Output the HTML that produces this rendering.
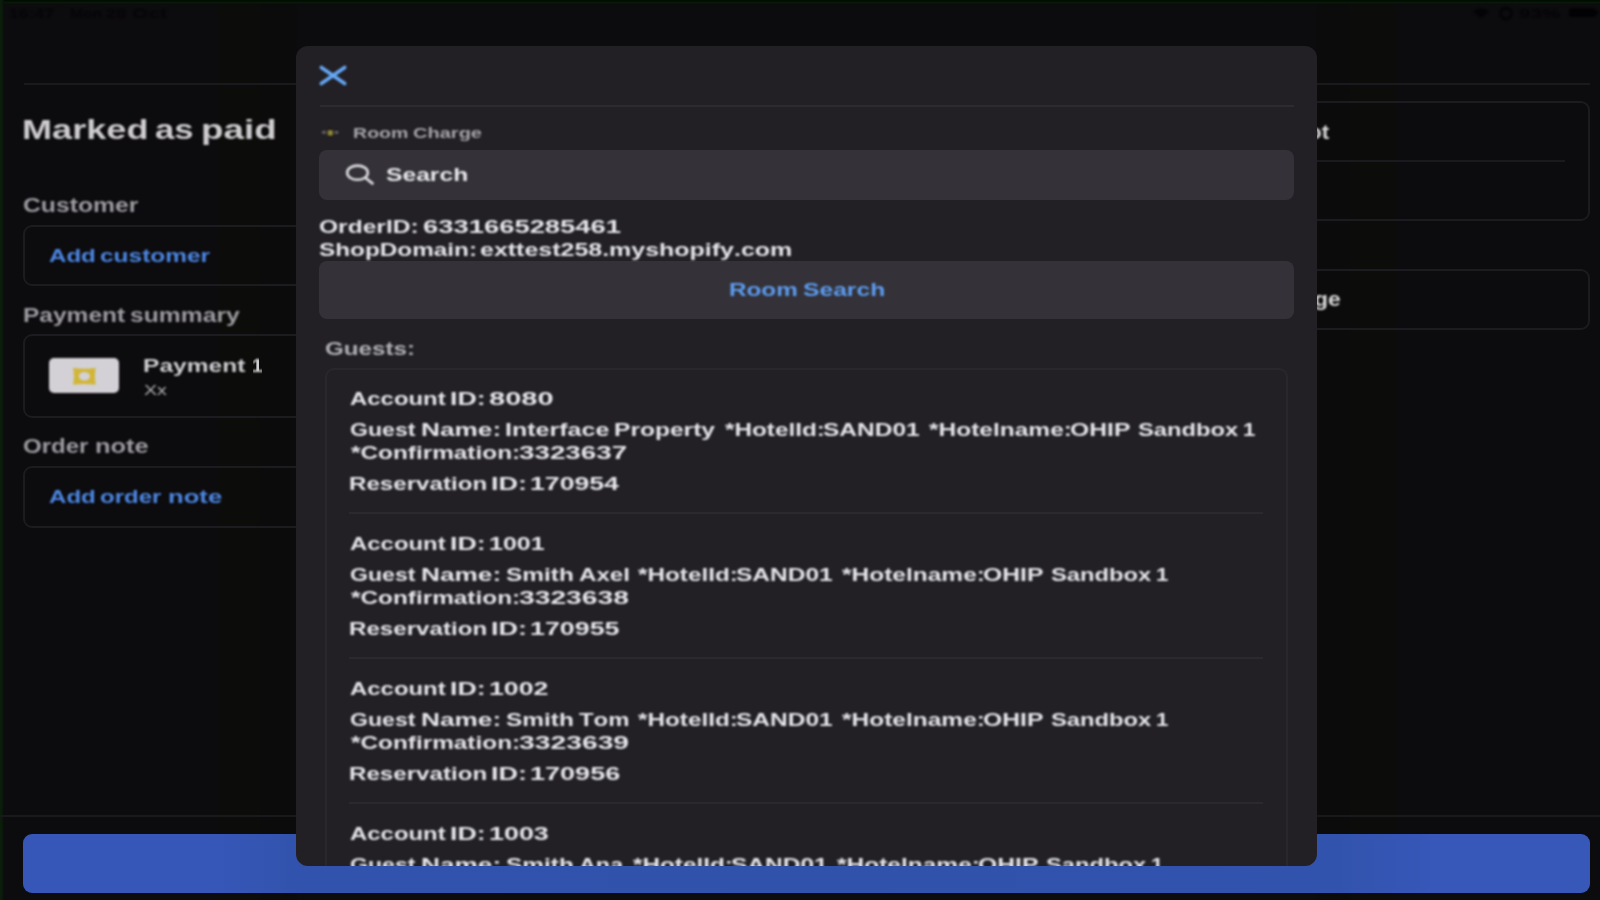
<!DOCTYPE html>
<html lang="en"><head><meta charset="utf-8"><title>Room Charge</title>
<style>
html,body{margin:0;padding:0;background:#0c0b0e;}
body{width:1600px;height:900px;overflow:hidden;font-family:"Liberation Sans",sans-serif;}
#app{position:relative;width:1600px;height:900px;overflow:hidden;background:#0c0b0e;}
#app div,#app span,#app svg{position:absolute;box-sizing:border-box;}
.t{white-space:nowrap;font-kerning:none;line-height:1;transform-origin:0 0;display:block;filter:blur(0.8px);}
.edge-top{left:0;top:0;width:1600px;height:4px;background:linear-gradient(#010a01 0,#021202 45%,#0a1a0a 65%,#0c0b0e 100%);}
.edge-left{left:0;top:0;width:4px;height:900px;background:linear-gradient(90deg,#0a210a,#0b180b 55%,#0c0b0e);}
.hline{height:2px;background:#1a191d;}
.card{border:2px solid #1c1b20;border-radius:9px;}
.chip{left:49.3px;top:358.4px;width:70px;height:34.2px;background:#d3d1d6;border-radius:5px;filter:blur(0.8px);}
.paybtn{left:23px;top:833.800px;width:1566.500px;height:59.200px;background:linear-gradient(90deg,#3657b8 0,#3657b8 12%,#3253ad 17%,#3152ab 50%,#3253ad 84%,#3757b9 90%,#3757b9 100%);border-radius:9px;}
#modal{left:296px;top:46px;width:1020.5px;height:820.3px;background:#222025;border-radius:12px;overflow:hidden;}
#mi{left:-296px;top:-46px;width:1600px;height:900px;}
.msep{left:320px;top:104.5px;width:974px;height:2px;background:#2c2b30;}
.field{left:319px;width:975px;background:#343238;border-radius:8px;}
.list{left:325px;top:368px;width:963px;height:560px;border:2px solid #29272d;border-radius:9px;}
.lsep{left:349px;width:914px;height:2px;background:#2a292e;}
.soft{filter:blur(0.8px);}
.band{top:0;height:900px;}

</style></head>
<body>
<div id="app">
<div class="band" style="left:218px;width:42px;background:#0c0d0a"></div>
<div class="band" style="left:260px;width:37px;background:#0c0b0b"></div>
<div class="band" style="left:1316px;width:34px;background:#0c0b0b"></div>
<div class="band" style="left:1350px;width:46px;background:#0c0d0a"></div>
<div class="edge-top"></div>
<div class="edge-left"></div>
<div class="hline" style="left:24px;top:83px;width:1566px"></div>
<svg class="soft" style="left:1468px;top:4px" width="132" height="18" viewBox="0 0 132 18">
<path d="M5 7.500 Q13 1.500 21 7.500 L13 14 Z" fill="#040306"/>
<circle cx="38" cy="9.500" r="5.500" fill="none" stroke="#040306" stroke-width="2.400"/>
<rect x="101" y="4.500" width="27" height="8.500" rx="2.800" fill="#020103"/>
<rect x="128.300" y="7" width="1.800" height="3.600" rx="0.800" fill="#020103"/>
</svg>
<div class="card" style="left:23px;top:224.5px;width:400px;height:61.5px"></div>
<div class="card" style="left:23px;top:334.4px;width:400px;height:83.200px"></div>
<div class="chip"></div>
<svg class="soft" style="left:72px;top:366.5px" width="25" height="19" viewBox="0 0 25 19">
<path d="M1.200 0.800 Q12.400 2.600 23.600 0.800 Q22 9.300 23.600 17.800 Q12.400 16 1.200 17.800 Q2.800 9.300 1.200 0.800 Z M12.400 5.100 A5.600 4.200 0 1 0 12.400 13.500 A5.600 4.200 0 1 0 12.400 5.100 Z" fill="#d1b538" fill-rule="evenodd"/>
</svg>
<div class="card" style="left:23px;top:465.8px;width:400px;height:61.800px"></div>
<div class="card" style="left:1200px;top:101px;width:389.500px;height:120.400px"></div>
<div class="hline" style="left:1300px;top:160px;width:265px"></div>
<div class="card" style="left:1200px;top:269.200px;width:389.500px;height:61.200px"></div>
<div class="hline" style="left:0;top:815px;width:1600px;background:#19181b"></div>
<div class="paybtn"></div>

<span class="t" style="left:9.49px;top:6.57px;font-size:13.5px;font-weight:700;color:#060508;transform:scaleX(1.3042)">16:47</span>
<span class="t" style="left:69.96px;top:6.57px;font-size:13.5px;font-weight:700;color:#060508;transform:scaleX(1.1539)">Mon</span>
<span class="t" style="left:106.37px;top:6.57px;font-size:13.5px;font-weight:700;color:#060508;transform:scaleX(1.3444)">28</span>
<span class="t" style="left:132.14px;top:6.57px;font-size:13.5px;font-weight:700;color:#060508;transform:scaleX(1.5606)">Oct</span>
<span class="t" style="left:1519.29px;top:6.57px;font-size:13.5px;font-weight:700;color:#050407;transform:scaleX(1.5270)">93%</span>
<span class="t" style="left:22.18px;top:116.74px;font-size:27px;font-weight:700;color:#cecccf;transform:scaleX(1.3375)">Marked</span>
<span class="t" style="left:155.23px;top:116.74px;font-size:27px;font-weight:700;color:#cecccf;transform:scaleX(1.2885)">as</span>
<span class="t" style="left:200.58px;top:116.74px;font-size:27px;font-weight:700;color:#cecccf;transform:scaleX(1.3621)">paid</span>
<span class="t" style="left:22.99px;top:195.37px;font-size:20px;font-weight:700;color:#9e9ca1;transform:scaleX(1.2361)">Customer</span>
<span class="t" style="left:48.50px;top:245.72px;font-size:19px;font-weight:700;color:#4d88e4;transform:scaleX(1.2682)">Add</span>
<span class="t" style="left:100.29px;top:245.72px;font-size:19px;font-weight:700;color:#4d88e4;transform:scaleX(1.2870)">customer</span>
<span class="t" style="left:22.86px;top:305.27px;font-size:20px;font-weight:700;color:#9e9ca1;transform:scaleX(1.2251)">Payment</span>
<span class="t" style="left:130.38px;top:305.27px;font-size:20px;font-weight:700;color:#9e9ca1;transform:scaleX(1.2340)">summary</span>
<span class="t" style="left:143.36px;top:355.52px;font-size:19px;font-weight:700;color:#cfcfd2;transform:scaleX(1.2922)">Payment</span>
<span class="t" style="left:251.61px;top:355.52px;font-size:19px;font-weight:700;color:#cfcfd2;transform:scaleX(0.9953)">1</span>
<span class="t" style="left:144.26px;top:382.38px;font-size:15.5px;font-weight:400;color:#b0b0b3;transform:scaleX(1.2689)">Xx</span>
<span class="t" style="left:23.01px;top:436.07px;font-size:20px;font-weight:700;color:#9e9ca1;transform:scaleX(1.2017)">Order</span>
<span class="t" style="left:94.92px;top:436.07px;font-size:20px;font-weight:700;color:#9e9ca1;transform:scaleX(1.2719)">note</span>
<span class="t" style="left:48.50px;top:487.12px;font-size:19px;font-weight:700;color:#4d88e4;transform:scaleX(1.2682)">Add</span>
<span class="t" style="left:100.31px;top:487.12px;font-size:19px;font-weight:700;color:#4d88e4;transform:scaleX(1.2622)">order</span>
<span class="t" style="left:167.61px;top:487.12px;font-size:19px;font-weight:700;color:#4d88e4;transform:scaleX(1.3506)">note</span>
<span class="t" style="left:1308.12px;top:121.87px;font-size:20px;font-weight:700;color:#d8d8da;transform:scaleX(1.1204)">ot</span>
<span class="t" style="left:1314.06px;top:289.07px;font-size:20px;font-weight:700;color:#d8d8da;transform:scaleX(1.1449)">ge</span>
<div id="modal"><div id="mi">
<svg class="soft" style="left:317px;top:63px" width="32" height="25" viewBox="0 0 32 25">
<path d="M4.300 4.500 L27.700 20.600 M27.700 4.500 L4.300 20.600" stroke="#66a8f8" stroke-width="3.600" stroke-linecap="round" fill="none"/>
</svg>
<div class="msep"></div>
<svg class="soft" style="left:318px;top:124px" width="26" height="18" viewBox="0 0 26 18">
<rect x="9.700" y="4.700" width="5.200" height="8.400" rx="1.600" fill="#141203"/>
<rect x="9.700" y="6" width="5.200" height="5.800" rx="1.300" fill="#8c853a"/>
<ellipse cx="6" cy="8.200" rx="2.200" ry="1.700" fill="#636065"/>
<ellipse cx="18.400" cy="8.300" rx="2.100" ry="1.600" fill="#656266"/>
</svg>
<div class="field" style="top:150px;height:50px"></div>
<svg class="soft" style="left:344px;top:162px" width="32" height="25" viewBox="0 0 32 25">
<ellipse cx="13.500" cy="10.700" rx="10.300" ry="7.100" stroke="#dcdce0" stroke-width="2.600" fill="none"/>
<path d="M21.600 16 L28.400 21.400" stroke="#dcdce0" stroke-width="2.800" stroke-linecap="round"/>
</svg>
<div class="field" style="top:261px;height:58.3px"></div>
<div class="list"></div>
<div class="lsep" style="top:511.5px"></div>
<div class="lsep" style="top:656.5px"></div>
<div class="lsep" style="top:801.5px"></div>

<span class="t" style="left:353.09px;top:124.88px;font-size:15.5px;font-weight:700;color:#a6a5aa;transform:scaleX(1.2621)">Room</span>
<span class="t" style="left:412.68px;top:124.88px;font-size:15.5px;font-weight:700;color:#a6a5aa;transform:scaleX(1.2922)">Charge</span>
<span class="t" style="left:386.29px;top:165.22px;font-size:19px;font-weight:700;color:#e8e8ec;transform:scaleX(1.2977)">Search</span>
<span class="t" style="left:318.99px;top:217.22px;font-size:19px;font-weight:700;color:#e6e6ea;transform:scaleX(1.2926)">OrderID:</span>
<span class="t" style="left:422.75px;top:217.22px;font-size:19px;font-weight:700;color:#e6e6ea;transform:scaleX(1.4415)">6331665285461</span>
<span class="t" style="left:319.30px;top:239.92px;font-size:19px;font-weight:700;color:#e6e6ea;transform:scaleX(1.2798)">ShopDomain:</span>
<span class="t" style="left:480.27px;top:239.92px;font-size:19px;font-weight:700;color:#e6e6ea;transform:scaleX(1.3143)">exttest258.myshopify.com</span>
<span class="t" style="left:728.63px;top:280.22px;font-size:19px;font-weight:700;color:#5d9cf0;transform:scaleX(1.2778)">Room</span>
<span class="t" style="left:802.69px;top:280.22px;font-size:19px;font-weight:700;color:#5d9cf0;transform:scaleX(1.2977)">Search</span>
<span class="t" style="left:325.26px;top:338.92px;font-size:19px;font-weight:700;color:#b2b2b6;transform:scaleX(1.2732)">Guests:</span>
<span class="t" style="left:350.40px;top:388.92px;font-size:19px;font-weight:700;color:#e6e6ea;transform:scaleX(1.2590)">Account</span>
<span class="t" style="left:449.81px;top:388.92px;font-size:19px;font-weight:700;color:#e6e6ea;transform:scaleX(1.4081)">ID:</span>
<span class="t" style="left:489.48px;top:388.92px;font-size:19px;font-weight:700;color:#e6e6ea;transform:scaleX(1.5262)">8080</span>
<span class="t" style="left:350.05px;top:420.42px;font-size:19px;font-weight:700;color:#e6e6ea;transform:scaleX(1.2170)">Guest</span>
<span class="t" style="left:421.05px;top:420.42px;font-size:19px;font-weight:700;color:#e6e6ea;transform:scaleX(1.3806)">Name:</span>
<span class="t" style="left:504.53px;top:420.42px;font-size:19px;font-weight:700;color:#e6e6ea;transform:scaleX(1.3173)">Interface</span>
<span class="t" style="left:613.76px;top:420.42px;font-size:19px;font-weight:700;color:#e6e6ea;transform:scaleX(1.2923)">Property</span>
<span class="t" style="left:725.23px;top:420.42px;font-size:19px;font-weight:700;color:#e6e6ea;transform:scaleX(1.2791)">*HotelId:</span>
<span class="t" style="left:823.39px;top:420.42px;font-size:19px;font-weight:700;color:#e6e6ea;transform:scaleX(1.2897)">SAND01</span>
<span class="t" style="left:929.03px;top:420.42px;font-size:19px;font-weight:700;color:#e6e6ea;transform:scaleX(1.2893)">*Hotelname:</span>
<span class="t" style="left:1070.49px;top:420.42px;font-size:19px;font-weight:700;color:#e6e6ea;transform:scaleX(1.2993)">OHIP</span>
<span class="t" style="left:1137.72px;top:420.42px;font-size:19px;font-weight:700;color:#e6e6ea;transform:scaleX(1.2496)">Sandbox</span>
<span class="t" style="left:1243.01px;top:420.42px;font-size:19px;font-weight:700;color:#e6e6ea;transform:scaleX(1.1650)">1</span>
<span class="t" style="left:350.93px;top:443.42px;font-size:19px;font-weight:700;color:#e6e6ea;transform:scaleX(1.2818)">*Confirmation:</span>
<span class="t" style="left:519.06px;top:443.42px;font-size:19px;font-weight:700;color:#e6e6ea;transform:scaleX(1.4622)">3323637</span>
<span class="t" style="left:349.39px;top:474.42px;font-size:19px;font-weight:700;color:#e6e6ea;transform:scaleX(1.2698)">Reservation</span>
<span class="t" style="left:490.59px;top:474.42px;font-size:19px;font-weight:700;color:#e6e6ea;transform:scaleX(1.4216)">ID:</span>
<span class="t" style="left:529.52px;top:474.42px;font-size:19px;font-weight:700;color:#e6e6ea;transform:scaleX(1.4025)">170954</span>
<span class="t" style="left:350.40px;top:533.92px;font-size:19px;font-weight:700;color:#e6e6ea;transform:scaleX(1.2590)">Account</span>
<span class="t" style="left:449.81px;top:533.92px;font-size:19px;font-weight:700;color:#e6e6ea;transform:scaleX(1.4081)">ID:</span>
<span class="t" style="left:488.83px;top:533.92px;font-size:19px;font-weight:700;color:#e6e6ea;transform:scaleX(1.3159)">1001</span>
<span class="t" style="left:350.05px;top:565.42px;font-size:19px;font-weight:700;color:#e6e6ea;transform:scaleX(1.2170)">Guest</span>
<span class="t" style="left:421.05px;top:565.42px;font-size:19px;font-weight:700;color:#e6e6ea;transform:scaleX(1.3806)">Name:</span>
<span class="t" style="left:505.55px;top:565.42px;font-size:19px;font-weight:700;color:#e6e6ea;transform:scaleX(1.2859)">Smith</span>
<span class="t" style="left:578.80px;top:565.42px;font-size:19px;font-weight:700;color:#e6e6ea;transform:scaleX(1.2710)">Axel</span>
<span class="t" style="left:638.23px;top:565.42px;font-size:19px;font-weight:700;color:#e6e6ea;transform:scaleX(1.2791)">*HotelId:</span>
<span class="t" style="left:736.39px;top:565.42px;font-size:19px;font-weight:700;color:#e6e6ea;transform:scaleX(1.2897)">SAND01</span>
<span class="t" style="left:842.03px;top:565.42px;font-size:19px;font-weight:700;color:#e6e6ea;transform:scaleX(1.2893)">*Hotelname:</span>
<span class="t" style="left:983.49px;top:565.42px;font-size:19px;font-weight:700;color:#e6e6ea;transform:scaleX(1.2993)">OHIP</span>
<span class="t" style="left:1050.72px;top:565.42px;font-size:19px;font-weight:700;color:#e6e6ea;transform:scaleX(1.2496)">Sandbox</span>
<span class="t" style="left:1156.01px;top:565.42px;font-size:19px;font-weight:700;color:#e6e6ea;transform:scaleX(1.1650)">1</span>
<span class="t" style="left:350.93px;top:588.42px;font-size:19px;font-weight:700;color:#e6e6ea;transform:scaleX(1.2818)">*Confirmation:</span>
<span class="t" style="left:519.05px;top:588.42px;font-size:19px;font-weight:700;color:#e6e6ea;transform:scaleX(1.4860)">3323638</span>
<span class="t" style="left:349.39px;top:619.42px;font-size:19px;font-weight:700;color:#e6e6ea;transform:scaleX(1.2698)">Reservation</span>
<span class="t" style="left:490.59px;top:619.42px;font-size:19px;font-weight:700;color:#e6e6ea;transform:scaleX(1.4216)">ID:</span>
<span class="t" style="left:529.51px;top:619.42px;font-size:19px;font-weight:700;color:#e6e6ea;transform:scaleX(1.4122)">170955</span>
<span class="t" style="left:350.40px;top:678.92px;font-size:19px;font-weight:700;color:#e6e6ea;transform:scaleX(1.2590)">Account</span>
<span class="t" style="left:449.81px;top:678.92px;font-size:19px;font-weight:700;color:#e6e6ea;transform:scaleX(1.4081)">ID:</span>
<span class="t" style="left:488.72px;top:678.92px;font-size:19px;font-weight:700;color:#e6e6ea;transform:scaleX(1.4041)">1002</span>
<span class="t" style="left:350.05px;top:710.42px;font-size:19px;font-weight:700;color:#e6e6ea;transform:scaleX(1.2170)">Guest</span>
<span class="t" style="left:421.05px;top:710.42px;font-size:19px;font-weight:700;color:#e6e6ea;transform:scaleX(1.3806)">Name:</span>
<span class="t" style="left:505.55px;top:710.42px;font-size:19px;font-weight:700;color:#e6e6ea;transform:scaleX(1.2859)">Smith</span>
<span class="t" style="left:579.13px;top:710.42px;font-size:19px;font-weight:700;color:#e6e6ea;transform:scaleX(1.2579)">Tom</span>
<span class="t" style="left:638.23px;top:710.42px;font-size:19px;font-weight:700;color:#e6e6ea;transform:scaleX(1.2791)">*HotelId:</span>
<span class="t" style="left:736.39px;top:710.42px;font-size:19px;font-weight:700;color:#e6e6ea;transform:scaleX(1.2897)">SAND01</span>
<span class="t" style="left:842.03px;top:710.42px;font-size:19px;font-weight:700;color:#e6e6ea;transform:scaleX(1.2893)">*Hotelname:</span>
<span class="t" style="left:983.49px;top:710.42px;font-size:19px;font-weight:700;color:#e6e6ea;transform:scaleX(1.2993)">OHIP</span>
<span class="t" style="left:1050.72px;top:710.42px;font-size:19px;font-weight:700;color:#e6e6ea;transform:scaleX(1.2496)">Sandbox</span>
<span class="t" style="left:1156.01px;top:710.42px;font-size:19px;font-weight:700;color:#e6e6ea;transform:scaleX(1.1650)">1</span>
<span class="t" style="left:350.93px;top:733.42px;font-size:19px;font-weight:700;color:#e6e6ea;transform:scaleX(1.2818)">*Confirmation:</span>
<span class="t" style="left:519.05px;top:733.42px;font-size:19px;font-weight:700;color:#e6e6ea;transform:scaleX(1.4885)">3323639</span>
<span class="t" style="left:349.39px;top:764.42px;font-size:19px;font-weight:700;color:#e6e6ea;transform:scaleX(1.2698)">Reservation</span>
<span class="t" style="left:490.59px;top:764.42px;font-size:19px;font-weight:700;color:#e6e6ea;transform:scaleX(1.4216)">ID:</span>
<span class="t" style="left:529.50px;top:764.42px;font-size:19px;font-weight:700;color:#e6e6ea;transform:scaleX(1.4232)">170956</span>
<span class="t" style="left:350.40px;top:823.92px;font-size:19px;font-weight:700;color:#e6e6ea;transform:scaleX(1.2590)">Account</span>
<span class="t" style="left:449.81px;top:823.92px;font-size:19px;font-weight:700;color:#e6e6ea;transform:scaleX(1.4081)">ID:</span>
<span class="t" style="left:488.71px;top:823.92px;font-size:19px;font-weight:700;color:#e6e6ea;transform:scaleX(1.4139)">1003</span>
<span class="t" style="left:350.05px;top:855.42px;font-size:19px;font-weight:700;color:#e6e6ea;transform:scaleX(1.2170)">Guest</span>
<span class="t" style="left:421.05px;top:855.42px;font-size:19px;font-weight:700;color:#e6e6ea;transform:scaleX(1.3806)">Name:</span>
<span class="t" style="left:505.55px;top:855.42px;font-size:19px;font-weight:700;color:#e6e6ea;transform:scaleX(1.2859)">Smith</span>
<span class="t" style="left:578.82px;top:855.42px;font-size:19px;font-weight:700;color:#e6e6ea;transform:scaleX(1.2295)">Ana</span>
<span class="t" style="left:633.23px;top:855.42px;font-size:19px;font-weight:700;color:#e6e6ea;transform:scaleX(1.2791)">*HotelId:</span>
<span class="t" style="left:731.39px;top:855.42px;font-size:19px;font-weight:700;color:#e6e6ea;transform:scaleX(1.2897)">SAND01</span>
<span class="t" style="left:837.03px;top:855.42px;font-size:19px;font-weight:700;color:#e6e6ea;transform:scaleX(1.2893)">*Hotelname:</span>
<span class="t" style="left:978.49px;top:855.42px;font-size:19px;font-weight:700;color:#e6e6ea;transform:scaleX(1.2993)">OHIP</span>
<span class="t" style="left:1045.72px;top:855.42px;font-size:19px;font-weight:700;color:#e6e6ea;transform:scaleX(1.2496)">Sandbox</span>
<span class="t" style="left:1151.01px;top:855.42px;font-size:19px;font-weight:700;color:#e6e6ea;transform:scaleX(1.1650)">1</span>
<span class="t" style="left:350.93px;top:878.42px;font-size:19px;font-weight:700;color:#e6e6ea;transform:scaleX(1.2818)">*Confirmation:</span>
<span class="t" style="left:519.05px;top:878.42px;font-size:19px;font-weight:700;color:#e6e6ea;transform:scaleX(1.4900)">3323640</span>
<span class="t" style="left:349.39px;top:909.42px;font-size:19px;font-weight:700;color:#e6e6ea;transform:scaleX(1.2698)">Reservation</span>
<span class="t" style="left:490.59px;top:909.42px;font-size:19px;font-weight:700;color:#e6e6ea;transform:scaleX(1.4216)">ID:</span>
<span class="t" style="left:529.50px;top:909.42px;font-size:19px;font-weight:700;color:#e6e6ea;transform:scaleX(1.4193)">170957</span>
</div></div>
</div>
</body></html>
